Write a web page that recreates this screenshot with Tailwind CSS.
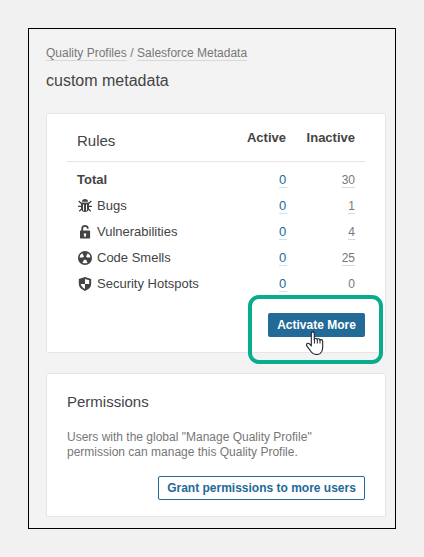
<!DOCTYPE html>
<html lang="en">
<head>
<meta charset="utf-8">
<title>custom metadata</title>
<script src="https://cdn.jsdelivr.net/npm/@tailwindcss/browser@4"></script>
</head>
<body class="w-[424px] h-[557px] overflow-hidden bg-[#f1f1f1] p-7 font-['Liberation_Sans',Arial,sans-serif] text-[13px] leading-4 text-[#444]">
<main class="w-[368px] h-[501px] border border-black bg-[#f3f3f3] pl-[17px] pr-[9px] pt-4">
  <nav class="flex h-4 gap-[3.5px] text-xs leading-[17px] text-[#777]">
    <a class="h-4 border-b border-[#d8d8d8]">Quality Profiles</a><span>/</span><a class="h-4 border-b border-[#d8d8d8]">Salesforce Metadata</a>
  </nav>
  <h1 class="mt-[10px] h-5 text-base leading-5">custom metadata</h1>

  <section class="relative mt-[22px] h-[240px] w-[340px] rounded-[2px] border border-[#e6e6e6] bg-white px-5">
    <div class="flex h-12 border-b border-[#e6e6e6] pl-[10px] pr-[10px]">
      <h2 class="flex-1 pt-[18px] text-[15px] leading-[18px]">Rules</h2>
      <div class="pt-4 font-bold">Active</div>
      <div class="w-[69px] pt-4 text-right font-bold">Inactive</div>
    </div>
    <div class="pt-[5px] px-[10px]">
      <div class="flex h-[26px] items-center">
        <span class="flex-1 font-bold">Total</span>
        <a class="h-4 w-2 border-b border-[#cae3f2] text-[#236a97] leading-[15px]">0</a>
        <div class="flex w-[68px] justify-end"><a class="h-4 border-b border-[#d8d8d8] text-xs leading-[17px] text-[#777]">30</a></div>
      </div>
      <div class="flex h-[26px] items-center">
        <svg class="mr-1 h-4 w-4" viewBox="0 0 16 16" fill="none" stroke="#444"><path fill="#444" stroke="none" d="M5 3.8a3 2.8 0 0 1 6 0zM4 4.8h8v6q-.5 2.9-4 3.2-3.5-.3-4-3.2z"/><path d="M1.6 3l2.6 2.3h7.6L14.4 3M1 8.3h14M4.9 10.8l-2.7 2.4M11.1 10.8l2.7 2.4" stroke-width="1.3"/><path d="M6.5 6.5v6M9.5 6.5v6" stroke="white"/></svg>
        <span class="flex-1">Bugs</span>
        <a class="h-4 w-2 border-b border-[#cae3f2] text-[#236a97] leading-[15px]">0</a>
        <div class="flex w-[68px] justify-end"><a class="h-4 border-b border-[#d8d8d8] text-xs leading-[17px] text-[#777]">1</a></div>
      </div>
      <div class="flex h-[26px] items-center">
        <svg class="mr-1 h-4 w-4" viewBox="0 0 16 16"><path fill="none" stroke="#444" stroke-width="1.8" d="M5.2 7.5V4.7a2.8 2.8 0 0 1 5.6 0"/><path fill="#444" fill-rule="evenodd" d="M3.8 6.5h8.5q.8 0 .8.8v6.4q0 .9-.9.9H3.9q-.9 0-.9-.9V7.3q0-.8.8-.8zM8 9.2a1.3 1.3 0 0 0-.7 2.4V13h1.4v-1.4A1.3 1.3 0 0 0 8 9.2z"/></svg>
        <span class="flex-1">Vulnerabilities</span>
        <a class="h-4 w-2 border-b border-[#cae3f2] text-[#236a97] leading-[15px]">0</a>
        <div class="flex w-[68px] justify-end"><a class="h-4 border-b border-[#d8d8d8] text-xs leading-[17px] text-[#777]">4</a></div>
      </div>
      <div class="flex h-[26px] items-center">
        <svg class="mr-1 h-4 w-4" viewBox="0 0 16 16"><circle cx="8" cy="8" r="7" fill="#444"/><path fill="white" d="M7 6.4L5.2 3.2a5.4 5.4 0 0 0-2.6 4.4h3.7zM9 6.4l1.8-3.2a5.4 5.4 0 0 1 2.6 4.4H9.7zM7.2 9.4L5.4 12.7q2.6 1.3 5.2 0L8.8 9.4z"/><circle cx="8" cy="8" r="1.8" fill="#444"/></svg>
        <span class="flex-1">Code Smells</span>
        <a class="h-4 w-2 border-b border-[#cae3f2] text-[#236a97] leading-[15px]">0</a>
        <div class="flex w-[68px] justify-end"><a class="h-4 border-b border-[#d8d8d8] text-xs leading-[17px] text-[#777]">25</a></div>
      </div>
      <div class="flex h-[26px] items-center">
        <svg class="mr-1 h-4 w-4" viewBox="0 0 16 16"><path fill="#444" d="M8 1L14.2 3v4.7q0 4.7-6.2 7.3-6.2-2.6-6.2-7.3V3z"/><path fill="white" d="M8 3l4.2 1.3V8H8zM3.8 8H8v4.9Q4.3 11 3.8 8z"/></svg>
        <span class="flex-1">Security Hotspots</span>
        <a class="h-4 w-2 border-b border-[#cae3f2] text-[#236a97] leading-[15px]">0</a>
        <div class="flex w-[68px] justify-end"><span class="h-4 text-xs leading-[17px] text-[#777]">0</span></div>
      </div>
    </div>
    <div class="flex justify-end pt-4">
      <button class="h-6 w-[97px] rounded-[2px] bg-[#236a97] text-center text-xs font-bold leading-6 text-white">Activate More</button>
    </div>
    <div class="absolute left-[201px] top-[181px] h-[69px] w-[135px] rounded-[11px] border-4 border-[#08ad8d]"></div>
    <svg class="absolute left-[259px] top-[217px] h-6 w-[19px]" viewBox="0 0 19 24"><path fill="white" stroke="#20202d" stroke-width="1.1" stroke-linejoin="round" d="M5.3 15V2.4a1.5 1.5 0 0 1 3 0v6q.3-1.3 1.5-1.2 1.3 0 1.4 1.5.3-1 1.4-.9 1.2.1 1.3 1.5.3-.8 1.3-.7 1.5.2 1.5 1.9V16.5q0 4-2.4 5.9-1.5 1.1-3.7 1.1-3.5 0-5.5-2.8L1 15.2q-1-1.7.2-2.7 1.3-.7 2.5.7z"/><path d="M8.4 8v4.5M11.3 8.5v4M14 9.2v3.3" fill="none" stroke="#20202d"/></svg>
  </section>

  <section class="mt-5 h-36 w-[340px] rounded-[2px] border border-[#e6e6e6] bg-white px-5 pt-[19px]">
    <h2 class="text-[15px] leading-[18px]">Permissions</h2>
    <p class="mt-[19px] text-xs leading-[15px] text-[#777]">Users with the global "Manage Quality Profile"<br>permission can manage this Quality Profile.</p>
    <div class="flex justify-end pt-4">
      <button class="h-6 w-[207px] rounded-[2px] border border-[#236a97] text-center text-xs font-bold leading-[22px] text-[#236a97]">Grant permissions to more users</button>
    </div>
  </section>
</main>
</body>
</html>
